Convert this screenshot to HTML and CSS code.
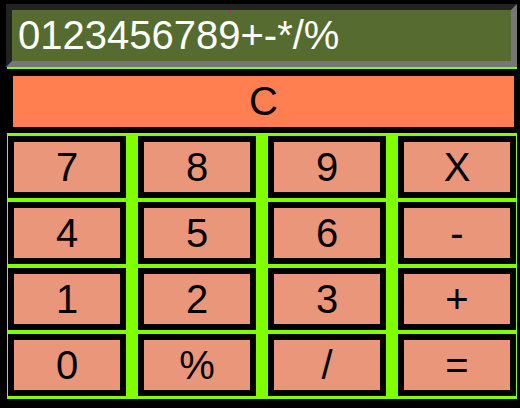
FILE: index.html
```html
<!DOCTYPE html>
<html>
<head>
<meta charset="utf-8">
<link rel="stylesheet" href="styles.css">
</head>
<body>
<div class="calc">
  <div class="display">0123456789+-*/%<span class="dot"></span></div>
  <div class="rule"></div>
  <div class="clear">C</div>
  <div class="keypad">
    <div class="key">7</div>
    <div class="key">8</div>
    <div class="key">9</div>
    <div class="key">X</div>
    <div class="key">4</div>
    <div class="key">5</div>
    <div class="key">6</div>
    <div class="key">-</div>
    <div class="key">1</div>
    <div class="key">2</div>
    <div class="key">3</div>
    <div class="key">+</div>
    <div class="key">0</div>
    <div class="key">%</div>
    <div class="key">/</div>
    <div class="key">=</div>
  </div>
</div>
</body>
</html>
```

FILE: styles.css
```css
html, body {
  margin: 0;
  padding: 0;
  background: #000;
}
body {
  width: 520px;
  height: 408px;
  overflow: hidden;
  font-family: "Liberation Sans", Arial, sans-serif;
}
.calc {
  display: flex;
  flex-direction: column;
  padding-top: 4px;
}
.display {
  position: relative;
  box-sizing: border-box;
  width: 511px;
  height: 63px;
  margin-left: 6px;
  border-style: solid;
  border-width: 6px;
  border-color: #222 #767676 #767676 #222;
  background: #556b2f;
  color: #fff;
  font-size: 40px;
  line-height: 51px;
  padding-left: 6px;
  white-space: nowrap;
}
.dot {
  position: absolute;
  left: 217px;
  top: 0;
  width: 2px;
  height: 3px;
  background: #a8306a;
}
.rule {
  width: 510px;
  height: 2px;
  margin-left: 7px;
  background: #7fff00;
}
.clear {
  box-sizing: border-box;
  width: 501px;
  height: 51px;
  margin: 7px 0 0 13px;
  background: #ff7f50;
  color: #000;
  font-size: 40px;
  display: flex;
  align-items: center;
  justify-content: center;
}
.keypad {
  margin: 6px 0 0 7px;
  width: 510px;
  box-sizing: border-box;
  padding: 3px 2px 3px 1px;
  background: #7fff00;
  display: grid;
  grid-template-columns: repeat(4, 118px);
  grid-auto-rows: 62px;
  column-gap: 12px;
  row-gap: 4px;
}
.key {
  box-sizing: border-box;
  border: 6px solid #000;
  background: #e9967a;
  color: #000;
  font-size: 40px;
  display: flex;
  align-items: center;
  justify-content: center;
}
```
